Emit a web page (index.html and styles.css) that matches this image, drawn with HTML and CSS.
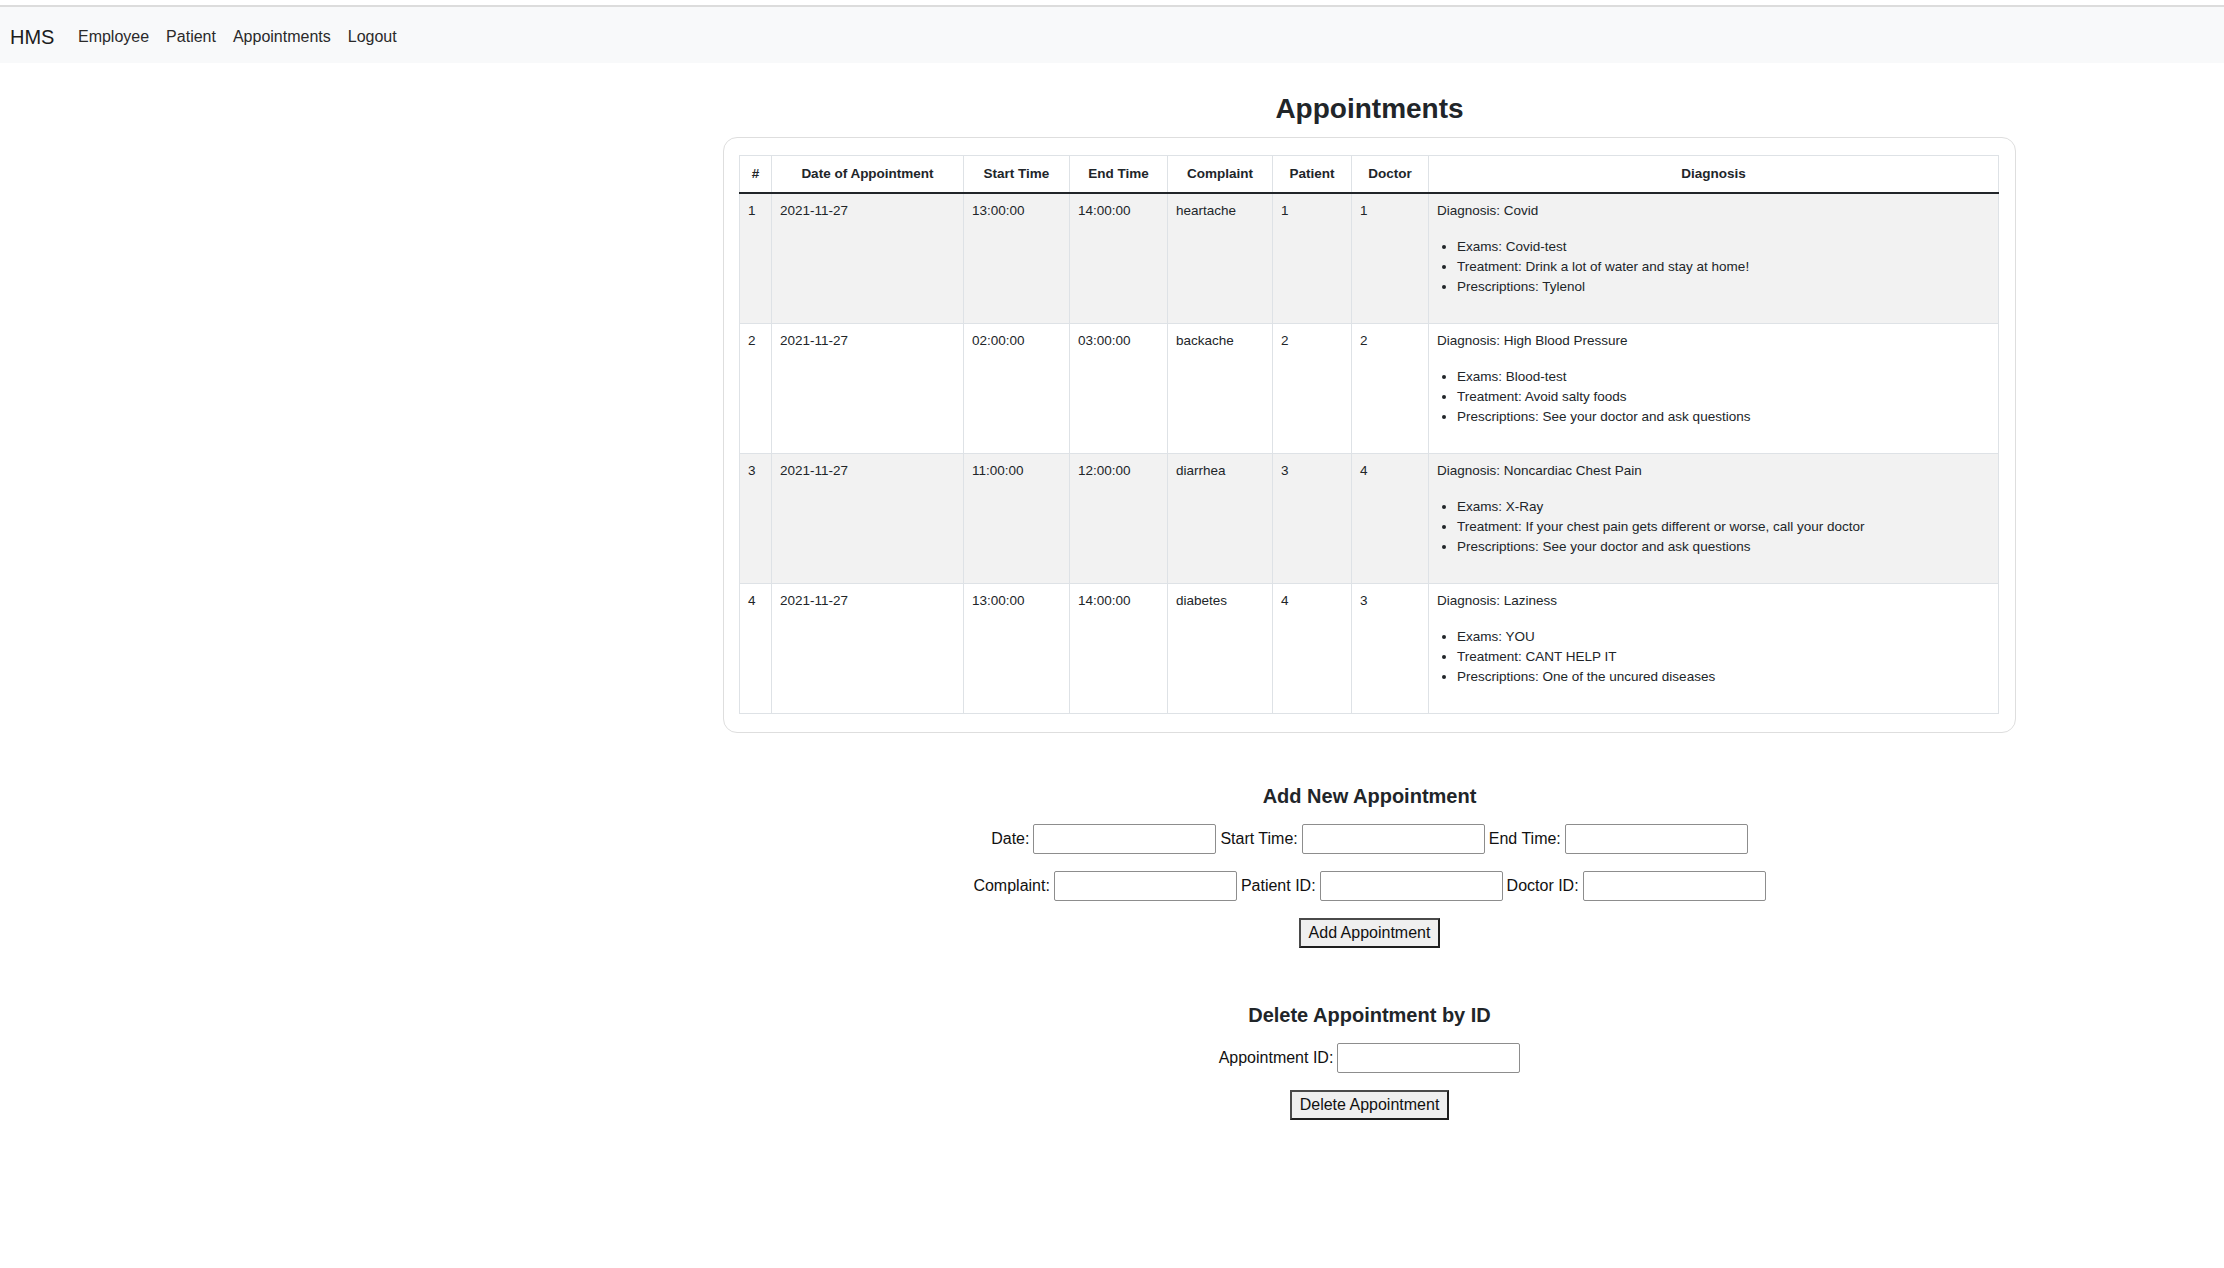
FILE: index.html
```html
<!DOCTYPE html>
<html lang="en">
<head>
<meta charset="utf-8">
<title>HMS - Appointments</title>
<link rel="stylesheet" href="styles.css">
</head>
<body>
<div class="topline"></div>
<nav class="navbar">
  <a class="brand" href="#">HMS</a>
  <a class="nav-link" href="#">Employee</a>
  <a class="nav-link" href="#">Patient</a>
  <a class="nav-link" href="#">Appointments</a>
  <a class="nav-link" href="#">Logout</a>
</nav>

<div class="layout">
  <div class="aside"></div>
  <main class="main">
    <h1 class="page-title">Appointments</h1>
    <div class="card">
      <table class="appt-table">
        <colgroup>
          <col class="c-num"><col class="c-date"><col class="c-start"><col class="c-end">
          <col class="c-complaint"><col class="c-patient"><col class="c-doctor"><col class="c-diag">
        </colgroup>
        <thead>
          <tr>
            <th>#</th><th>Date of Appointment</th><th>Start Time</th><th>End Time</th>
            <th>Complaint</th><th>Patient</th><th>Doctor</th><th>Diagnosis</th>
          </tr>
        </thead>
        <tbody>
          <tr>
            <td>1</td><td>2021-11-27</td><td>13:00:00</td><td>14:00:00</td><td>heartache</td><td>1</td><td>1</td>
            <td class="diag"><p>Diagnosis: Covid</p>
              <ul><li>Exams: Covid-test</li><li>Treatment: Drink a lot of water and stay at home!</li><li>Prescriptions: Tylenol</li></ul></td>
          </tr>
          <tr>
            <td>2</td><td>2021-11-27</td><td>02:00:00</td><td>03:00:00</td><td>backache</td><td>2</td><td>2</td>
            <td class="diag"><p>Diagnosis: High Blood Pressure</p>
              <ul><li>Exams: Blood-test</li><li>Treatment: Avoid salty foods</li><li>Prescriptions: See your doctor and ask questions</li></ul></td>
          </tr>
          <tr>
            <td>3</td><td>2021-11-27</td><td>11:00:00</td><td>12:00:00</td><td>diarrhea</td><td>3</td><td>4</td>
            <td class="diag"><p>Diagnosis: Noncardiac Chest Pain</p>
              <ul><li>Exams: X-Ray</li><li>Treatment: If your chest pain gets different or worse, call your doctor</li><li>Prescriptions: See your doctor and ask questions</li></ul></td>
          </tr>
          <tr>
            <td>4</td><td>2021-11-27</td><td>13:00:00</td><td>14:00:00</td><td>diabetes</td><td>4</td><td>3</td>
            <td class="diag"><p>Diagnosis: Laziness</p>
              <ul><li>Exams: YOU</li><li>Treatment: CANT HELP IT</li><li>Prescriptions: One of the uncured diseases</li></ul></td>
          </tr>
        </tbody>
      </table>
    </div>

    <section class="form-section add-section">
      <h2 class="section-title">Add New Appointment</h2>
      <div class="form-row">
        <label for="date">Date:</label><input id="date" type="text">
        <label for="start">Start Time:</label><input id="start" type="text">
        <label for="end">End Time:</label><input id="end" type="text">
      </div>
      <div class="form-row">
        <label for="complaint">Complaint:</label><input id="complaint" type="text">
        <label for="patient">Patient ID:</label><input id="patient" type="text">
        <label for="doctor">Doctor ID:</label><input id="doctor" type="text">
      </div>
      <div class="form-row">
        <button type="button" class="btn">Add Appointment</button>
      </div>
    </section>

    <section class="form-section delete-section">
      <h2 class="section-title">Delete Appointment by ID</h2>
      <div class="form-row">
        <label for="apptid">Appointment ID:</label><input id="apptid" type="text">
      </div>
      <div class="form-row">
        <button type="button" class="btn">Delete Appointment</button>
      </div>
    </section>
  </main>
</div>
</body>
</html>
```

FILE: styles.css
```css
html, body {
  margin: 0;
  padding: 0;
  background: #ffffff;
  font-family: "Liberation Sans", Arial, Helvetica, sans-serif;
  color: #212529;
}

.topline {
  height: 5px;
  border-bottom: 2px solid #dcdcdc;
  background: #ffffff;
}

.navbar {
  display: flex;
  align-items: center;
  height: 56px;
  box-sizing: border-box;
  padding: 4px 0 0 10px;
  background: #f8f9fa;
}

.brand {
  font-size: 20px;
  line-height: 30px;
  color: #1c1c1c;
  text-decoration: none;
  margin-right: 15px;
}

.nav-link {
  font-size: 16px;
  line-height: 24px;
  color: #2a2a2a;
  text-decoration: none;
  padding: 0 8.5px;
}

.layout {
  display: grid;
  grid-template-columns: 723px 1293px;
}

.main {
  display: flex;
  flex-direction: column;
}

.page-title {
  margin: 30px 0 12px;
  font-size: 28px;
  line-height: 32px;
  font-weight: 700;
  text-align: center;
  color: #212529;
}

.card {
  border: 1px solid #dedede;
  border-radius: 14px;
  padding: 17px 16px 18px 15px;
}

.appt-table {
  width: 100%;
  border-collapse: collapse;
  table-layout: fixed;
  font-size: 13.5px;
  line-height: 20px;
  color: #212529;
}

.c-num { width: 32px; }
.c-date { width: 192px; }
.c-start { width: 106px; }
.c-end { width: 98px; }
.c-complaint { width: 105px; }
.c-patient { width: 79px; }
.c-doctor { width: 77px; }
.c-diag { width: auto; }

.appt-table th,
.appt-table td {
  border: 1px solid #dee2e6;
  padding: 8px;
  vertical-align: top;
  text-align: left;
}

.appt-table tbody td {
  padding-top: 7px;
  padding-bottom: 9px;
}

.appt-table thead th {
  text-align: center;
  font-weight: 700;
  border-bottom: 2px solid #212529;
}

.appt-table tbody tr:nth-child(odd) td {
  background: #f2f2f2;
}

.diag p {
  margin: 0 0 16px;
}

.diag ul {
  margin: 0 0 17px;
  padding-left: 20px;
}

.form-section {
  display: flex;
  flex-direction: column;
  align-items: center;
}

.add-section {
  margin-top: 51px;
}

.delete-section {
  margin-top: 38px;
}

.section-title {
  margin: 0 0 16px;
  font-size: 20px;
  line-height: 24px;
  font-weight: 700;
  color: #212529;
}

.form-row {
  display: flex;
  align-items: center;
  justify-content: center;
  gap: 4px;
  margin-bottom: 17px;
  font-size: 16px;
  color: #111111;
}

.form-row input {
  box-sizing: border-box;
  width: 183px;
  height: 30px;
  border: 1px solid #8d8d8d;
  border-radius: 2px;
  background: #ffffff;
  padding: 1px 4px;
  font: inherit;
}

.btn {
  box-sizing: border-box;
  height: 30px;
  padding: 0 8px;
  font-family: inherit;
  font-size: 16px;
  color: #111111;
  background: #efefef;
  border: 2px solid;
  border-color: #4a4a4a #1e1e1e #1e1e1e #4a4a4a;
  border-radius: 0;
}
```
